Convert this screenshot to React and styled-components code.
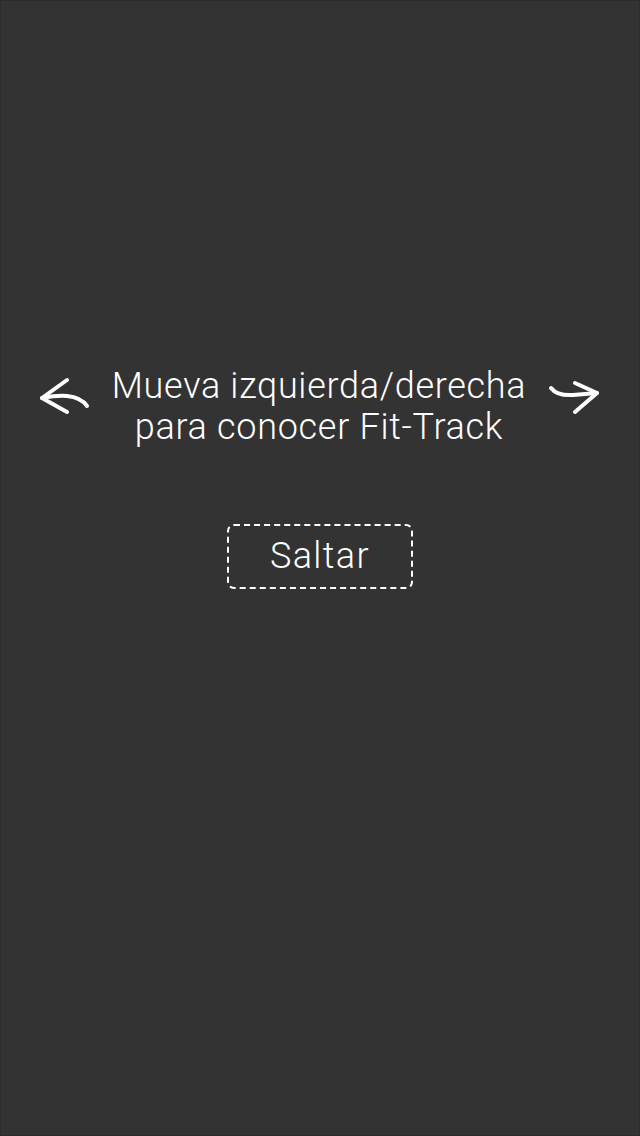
import styled, { createGlobalStyle } from "styled-components";

const GlobalStyle = createGlobalStyle`
  html, body {
    margin: 0;
    padding: 0;
    background: #333333;
  }
  * {
    box-sizing: border-box;
  }
`;

const Screen = styled.div`
  width: 640px;
  height: 1136px;
  background: #333333;
  border: 1px solid #2c2c2c;
  display: flex;
  flex-direction: column;
  align-items: center;
  padding-top: 365px;
  font-family: Roboto, "Liberation Sans", sans-serif;
  color: #ffffff;
`;

const HintRow = styled.div`
  width: 100%;
  display: flex;
  align-items: flex-start;
  justify-content: space-between;
  padding: 0 37px 0 35px;
`;

const HintText = styled.p`
  margin: 0;
  font-size: 36px;
  font-weight: 300;
  line-height: 41px;
  text-align: center;
  letter-spacing: 0.7px;
`;

const ArrowSvg = styled.svg`
  width: 56px;
  height: 44px;
  flex-shrink: 0;
  margin-top: 9px;
`;

const SkipButton = styled.button`
  margin-top: 76px;
  width: 186px;
  height: 65px;
  background: transparent;
  border: 2px dashed #ffffff;
  border-radius: 7px;
  color: #ffffff;
  font-family: Roboto, "Liberation Sans", sans-serif;
  font-size: 36px;
  font-weight: 300;
  letter-spacing: 1.4px;
  cursor: pointer;
  padding: 0 0 2px;
`;

const LeftArrow = () => (
  <ArrowSvg viewBox="0 0 56 44">
    <g fill="none" stroke="#fff" strokeWidth="4" strokeLinecap="round" strokeLinejoin="round">
      <path d="M31 5 L6 23 L31 37" />
      <path d="M6 23 C 22 20, 42 18, 51 31" />
    </g>
  </ArrowSvg>
);

const RightArrow = () => (
  <ArrowSvg viewBox="0 0 56 44">
    <g fill="none" stroke="#fff" strokeWidth="4" strokeLinecap="round" strokeLinejoin="round">
      <path d="M5 13 Q 11 21 27 20 L 51 18" />
      <path d="M29 8 L51 18 L29 37" />
    </g>
  </ArrowSvg>
);

export default function App() {
  return (
    <>
      <GlobalStyle />
      <Screen>
        <HintRow>
          <LeftArrow />
          <HintText>
            Mueva izquierda/derecha
            <br />
            para conocer Fit-Track
          </HintText>
          <RightArrow />
        </HintRow>
        <SkipButton>Saltar</SkipButton>
      </Screen>
    </>
  );
}
